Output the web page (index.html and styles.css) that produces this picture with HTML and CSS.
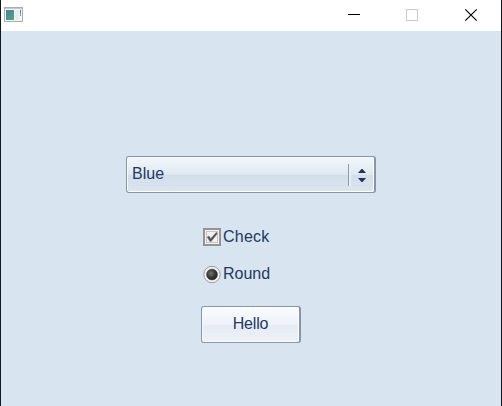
FILE: index.html
```html
<!DOCTYPE html>
<html lang="en">
<head>
<meta charset="utf-8">
<title>Window</title>
<link rel="stylesheet" href="styles.css">
</head>
<body>
<div class="window">
  <header class="titlebar">
    <svg class="app-icon" width="20" height="16" viewBox="0 0 20 16">
      <defs>
        <linearGradient id="screen" x1="0" y1="0" x2="1" y2="1">
          <stop offset="0" stop-color="#4a7fa6"/>
          <stop offset="1" stop-color="#4fa873"/>
        </linearGradient>
      </defs>
      <rect x="0.5" y="0.5" width="18" height="14" fill="#f4f5f7" stroke="#a9adb3"/>
      <path d="M1 1.5H18" stroke="#c3c8d0"/>
      <rect x="2" y="3" width="8" height="10" fill="url(#screen)"/>
      <rect x="11" y="3" width="4" height="10" fill="#e9ebee"/>
      <rect x="16" y="3" width="1" height="3" fill="#4a7fa6"/>
      <rect x="16" y="6" width="1" height="3" fill="#6fae8e"/>
    </svg>
    <div class="controls">
      <svg width="58" height="31" viewBox="0 0 58 31" shape-rendering="crispEdges"><path d="M23 14.5H35" stroke="#000"/></svg>
      <svg width="58" height="31" viewBox="0 0 58 31" shape-rendering="crispEdges"><rect x="23.5" y="9.5" width="11" height="11" fill="none" stroke="#ccc"/></svg>
      <svg width="58" height="31" viewBox="0 0 58 31"><path d="M24.3 9.3L35.7 20.7M35.7 9.3L24.3 20.7" stroke="#000" stroke-width="1.15"/></svg>
    </div>
  </header>
  <main class="content">
    <div class="raised combo">
      <span class="value">Blue</span>
      <span class="arrows">
        <svg width="8" height="13" viewBox="0 0 8 13"><path d="M0 4L3.5 0H4.5L8 4ZM0 9H8L4.5 13H3.5Z" fill="#203557"/></svg>
      </span>
    </div>
    <div class="options">
      <label class="option">
        <svg width="19" height="19" viewBox="0 0 19 19">
          <rect x="1" y="1" width="16" height="16" fill="#f3f3f3" stroke="#949494" stroke-width="2"/>
          <rect x="3.5" y="3.5" width="11" height="11" fill="#f1f1f1" stroke="#c4c4c4"/>
          <path d="M4.3 9L6 8.1L7.7 10.7L13.4 4.3L14.2 5.8L8 13.5H7Z" fill="#4d4d4d" stroke="#777" stroke-width=".8"/>
        </svg>
        <span class="check-label">Check</span>
      </label>
      <label class="option">
        <svg width="19" height="19" viewBox="0 0 19 19">
          <defs>
            <radialGradient id="dot" cx=".4" cy=".4" r=".6">
              <stop offset="0" stop-color="#737373"/>
              <stop offset=".65" stop-color="#383838"/>
              <stop offset="1" stop-color="#242424"/>
            </radialGradient>
          </defs>
          <circle cx="9" cy="9.5" r="8.2" fill="#f4f4f4" stroke="#999"/>
          <circle cx="9" cy="9.5" r="5.5" fill="url(#dot)" stroke="#444" stroke-width=".5"/>
        </svg>
        <span>Round</span>
      </label>
    </div>
    <div class="raised button">Hello</div>
  </main>
</div>
</body>
</html>
```
FILE: styles.css
```css
* { box-sizing: border-box; }

body {
  margin: 0;
  font: 16px/18px "Liberation Sans", Arial, sans-serif;
  color: #213a60;
}

.window {
  display: flex;
  flex-direction: column;
  height: 406px;
  overflow: hidden;
  border: solid #15171f;
  border-width: 0 1px;
  background: #d8e4f0;
}

.titlebar {
  display: flex;
  justify-content: space-between;
  height: 31px;
  background: #fff;
}

.app-icon { margin: 7px 0 0 3px; }

.controls { display: flex; padding-right: 2px; }
.controls svg { display: block; }

.content {
  display: flex;
  flex-direction: column;
  align-items: center;
  padding-top: 125px;
}

.raised {
  display: flex;
  align-items: center;
  height: 37px;
  border: 1px solid #8496a8;
  border-right-width: 2px;
  border-radius: 3px;
  box-shadow: inset 1px 0 #f8fbfe, inset -1px -1px #fff;
}

.combo {
  width: 250px;
  padding: 0 8px 0 5px;
  justify-content: space-between;
  background: linear-gradient(#f3f8fc 0%, #dfe8f1 50%, #d2deea 51%, #dbe5f0 100%);
}

.value { margin-top: -2px; }

.arrows {
  display: flex;
  align-items: center;
  height: 22px;
  padding: 1px 0 0 9px;
  border-left: 1px solid #8f9baa;
  box-shadow: inset 2px 0 #e9eff6;
}

.options {
  display: flex;
  flex-direction: column;
  gap: 18px;
  width: 96px;
  margin-top: 35px;
}

.option {
  display: flex;
  align-items: center;
  gap: 1px;
  height: 19px;
}

.option span { margin-top: -1px; }
.check-label { letter-spacing: 0.25px; }

.button {
  justify-content: center;
  width: 100px;
  margin-top: 22px;
  padding-bottom: 2px;
  letter-spacing: -0.2px;
  background: linear-gradient(#fafcfe 0%, #eef2f9 50%, #e5ebf4 51%, #edf2f9 100%);
}
```
